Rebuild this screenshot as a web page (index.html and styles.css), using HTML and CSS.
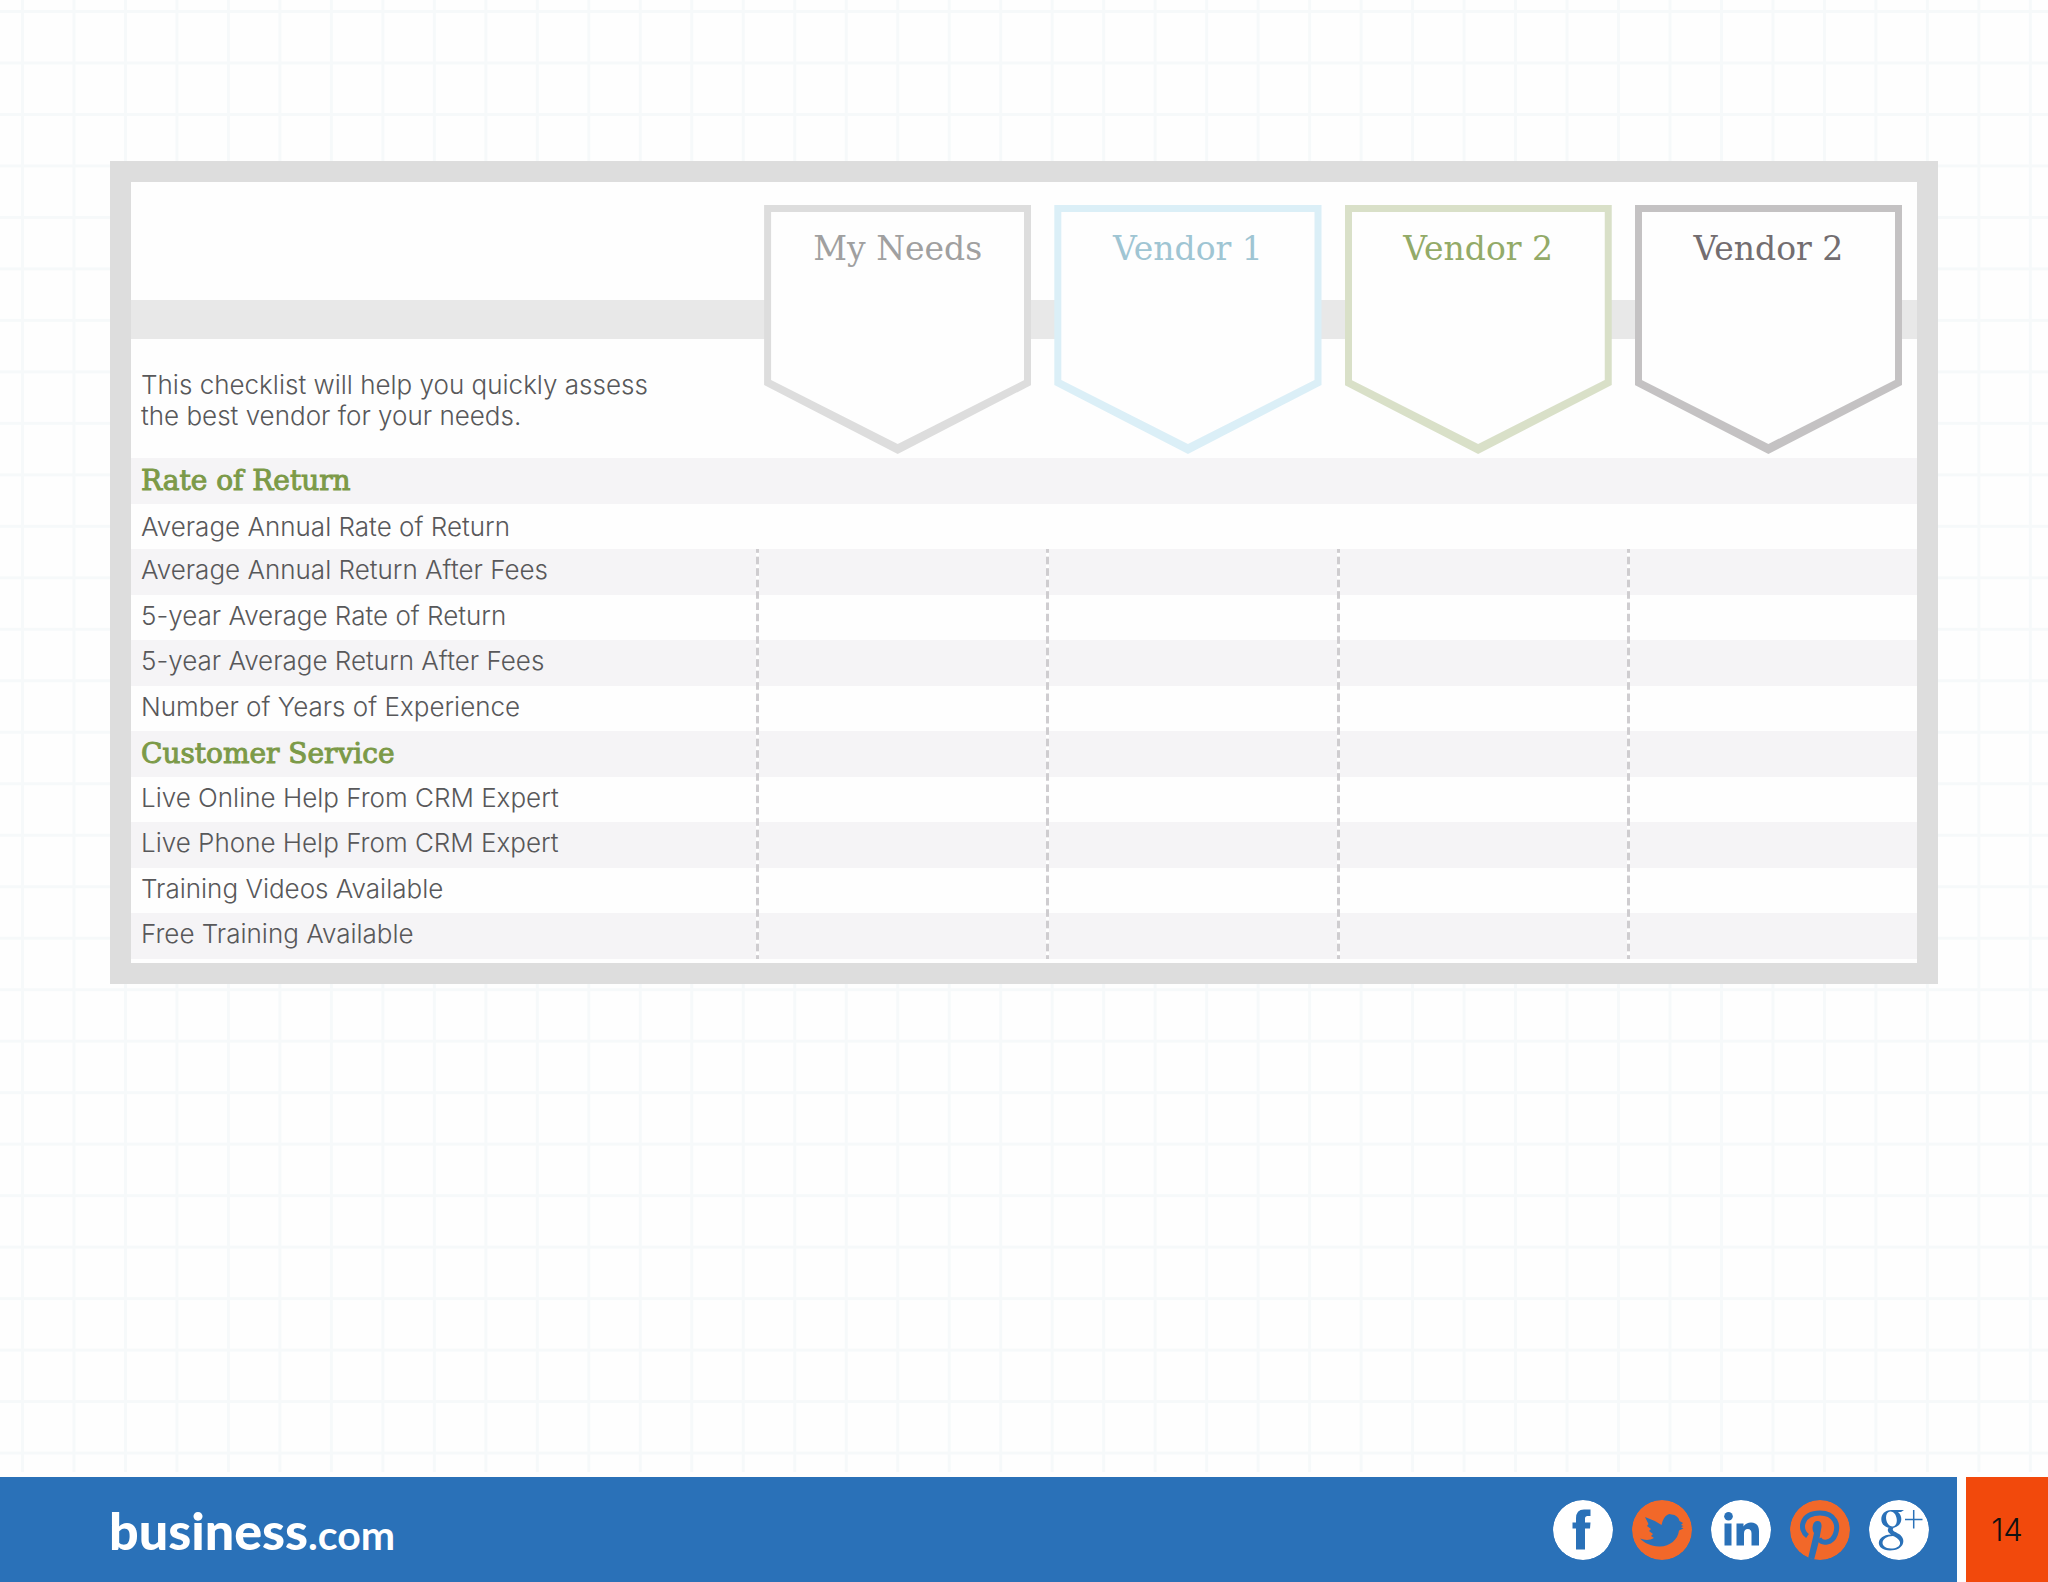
FILE: index.html
```html
<!DOCTYPE html>
<html lang="en">
<head>
    <meta charset="UTF-8">
    <meta name="viewport" content="width=device-width, initial-scale=1.0">
    <title>Vendor Checklist</title>
    <link rel="stylesheet" href="styles.css">
</head>
<body>
    <main class="content">
        <div class="checklist-frame">
            <table class="checklist">
                <thead>
                    <tr>
                        <th class="intro" scope="col">This checklist will help you quickly assess<br>the best vendor for your needs.</th>
                        <th scope="col"><div class="badge needs"><span>My Needs</span></div></th>
                        <th scope="col"><div class="badge vendor-blue"><span>Vendor 1</span></div></th>
                        <th scope="col"><div class="badge vendor-green"><span>Vendor 2</span></div></th>
                        <th scope="col"><div class="badge vendor-gray"><span>Vendor 2</span></div></th>
                    </tr>
                </thead>
                <tbody class="plain">
                    <tr class="section"><th scope="row">Rate of Return</th><td></td><td></td><td></td><td></td></tr>
                    <tr><th scope="row">Average Annual Rate of Return</th><td></td><td></td><td></td><td></td></tr>
                </tbody>
                <tbody class="ruled">
                    <tr><th scope="row">Average Annual Return After Fees</th><td></td><td></td><td></td><td></td></tr>
                    <tr><th scope="row">5-year Average Rate of Return</th><td></td><td></td><td></td><td></td></tr>
                    <tr><th scope="row">5-year Average Return After Fees</th><td></td><td></td><td></td><td></td></tr>
                    <tr><th scope="row">Number of Years of Experience</th><td></td><td></td><td></td><td></td></tr>
                    <tr class="section"><th scope="row">Customer Service</th><td></td><td></td><td></td><td></td></tr>
                    <tr><th scope="row">Live Online Help From CRM Expert</th><td></td><td></td><td></td><td></td></tr>
                    <tr><th scope="row">Live Phone Help From CRM Expert</th><td></td><td></td><td></td><td></td></tr>
                    <tr><th scope="row">Training Videos Available</th><td></td><td></td><td></td><td></td></tr>
                    <tr><th scope="row">Free Training Available</th><td></td><td></td><td></td><td></td></tr>
                </tbody>
            </table>
        </div>
    </main>

    <footer class="footer">
        <div class="footer-bar">
            <a class="logo" href="#">business<small>.com</small></a>
            <nav class="social">
                <a href="#" aria-label="Facebook">
                    <svg viewBox="0 0 60 60">
                        <circle class="disc" cx="30" cy="30" r="30"/>
                        <path class="mark" d="M23 49.5V28.5H19.5V22.5H23V18.5Q23 9.5 31 9.5H37.5V16H34.5Q32 16 32 18.5V22.5H37.5L37 28.5H32V49.5Z"/>
                    </svg>
                </a>
                <a href="#" aria-label="Twitter">
                    <svg viewBox="0 0 60 60">
                        <circle class="disc orange" cx="30" cy="30" r="30"/>
                        <path class="mark" d="M13 17Q22 20 29.5 25Q31 17 36 14.5L37.5 14L39.5 14.5Q46 15 47.5 21L51 23L49 25L51.5 26L49 27.2L51.5 28.5L47 30.5C46 40 37 47 27 46.5C19 46 12 43 8 38.5C13 40.5 18 40.5 22 38L19 36L21 34L17 31L19 29L15 26L16.5 24Z"/>
                    </svg>
                </a>
                <a href="#" aria-label="LinkedIn">
                    <svg viewBox="0 0 60 60">
                        <circle class="disc" cx="30" cy="30" r="30"/>
                        <circle class="mark" cx="17.5" cy="16.3" r="4.3"/>
                        <path class="mark" d="M13.5 23.5H20.5V45.5H13.5ZM25.5 23.5H32.5V26.5Q35 22.5 40 22.5Q48 22.5 48 31.5V45.5H40.5V33.5Q40.5 29 36.8 29Q33 29 33 33.5V45.5H25.5Z"/>
                    </svg>
                </a>
                <a href="#" aria-label="Pinterest">
                    <svg viewBox="0 0 60 60">
                        <circle class="disc orange" cx="30" cy="30" r="30"/>
                        <path class="line" stroke-width="5" d="M17.5 36C8.500 30 11 13 30 13C46 13 48.500 26 45.500 34C42 43.500 32 44.500 29 38.500"/>
                        <path class="mark" d="M22.500 28Q23 21 27.500 21Q32 21 31.500 27L29 41L24 60L18 58.500L24 33Q22.500 31 22.500 28Z"/>
                    </svg>
                </a>
                <a href="#" aria-label="Google Plus">
                    <svg viewBox="0 0 60 60">
                        <circle class="disc" cx="30" cy="30" r="30"/>
                        <path class="mark" fill-rule="evenodd" d="M22.500 10H35L32 12H29C35 17 33 28 22 28C9 28 9 10 22.500 10ZM21 11.500C14.500 12.500 16.500 26.500 23.500 26.500C30.500 26 28.500 11 21 11.500Z"/>
                        <path class="mark" fill-rule="evenodd" d="M20 27.500H25C21.500 30.500 26 31.500 30 34C38 39 35 50.500 21 50.500C6 50.500 6 35 22 34.500C18.500 32 18 29.500 20 27.500ZM24 36C11 36 10 48.500 22 48.500C33 48.500 34.500 40 24 36Z"/>
                        <path class="line" stroke-width="1.5" d="M36 19.500H53.500M44.700 10V28.500"/>
                    </svg>
                </a>
            </nav>
        </div>
        <div class="page-number">14</div>
    </footer>
</body>
</html>
```

FILE: styles.css
```css
* {
    box-sizing: border-box;
}
body {
    margin: 0;
    min-height: 100vh;
    display: flex;
    flex-direction: column;
    font-family: Inter, "Liberation Sans", sans-serif;
    font-weight: 300;
    color: #58585a;
    background-color: #fefefe;
    /* faint graph paper */
    background-image:
        linear-gradient(to right, #f6f9fa 3px, transparent 3px),
        linear-gradient(to bottom, #f6f9fa 3px, transparent 3px);
    background-size: 2.514vw 2.514vw;
    background-position: 21px 10px;
}
.content {
    flex: 1;
    padding: 161px 110px;
}
.checklist-frame {
    border: 21px solid #dddddd;
    background-color: #fefefe;
    padding-bottom: 4px;
}
.checklist {
    width: 100%;
    table-layout: fixed;
    border-collapse: collapse;
}
.checklist th, .checklist td {
    padding: 0;
    font-weight: 300;
    text-align: left;
}

/* header row, with the gray band behind the badges */
.checklist thead tr {
    height: 276px;
    background: linear-gradient(#e8e8e8, #e8e8e8) 0 118px / 100% 39px no-repeat;
}
.checklist thead th {
    vertical-align: top;
    padding: 23px 15px 0 8px;
}
.checklist thead .intro {
    width: 35%;
    padding: 187px 0 0 10px;
    font-size: 26px;
    line-height: 31px;
}
.badge {
    height: 249px;
    padding: 7px 7px 10px;
    clip-path: polygon(0 0, 100% 0, 100% 180px, 50% 100%, 0 180px);
}
.badge span {
    display: block;
    height: 100%;
    padding-top: 17px;
    background-color: #fefefe;
    clip-path: polygon(0 0, 100% 0, 100% 168px, 50% 100%, 0 168px);
    font-family: "DejaVu Serif", serif;
    font-size: 33px;
    line-height: 40px;
    font-weight: 400;
    text-align: center;
}
.needs {
    background-color: #dddddd;
    color: #a0a0a0;
}
.vendor-blue {
    background-color: #dbeff7;
    color: #9fc5d3;
}
.vendor-green {
    background-color: #d9e0c8;
    color: #93aa68;
}
.vendor-gray {
    background-color: #c4c2c3;
    color: #736d70;
}

/* rows */
.checklist tbody tr {
    height: 45px;
}
.checklist tbody tr:nth-child(odd) {
    height: 46px;
    background-color: #f5f4f6;
}
.checklist tbody th {
    padding: 0 0 4px 10px;
    font-size: 26px;
    line-height: 30px;
}
.checklist .plain th {
    padding-bottom: 0;
}
.checklist .section th {
    padding-bottom: 0;
    font-family: "DejaVu Serif", serif;
    font-size: 28px;
    font-weight: 400;
    color: #7c9a48;
    -webkit-text-stroke: 1px #7c9a48;
}
.ruled td {
    background: linear-gradient(#cfcdd0 30%, #fefefe 30%, #fefefe 68%, #cfcdd0 68%) 0 0 / 3px 25% repeat-y;
}

/* footer */
.footer {
    display: flex;
    gap: 9px;
    height: 110px;
    border-top: 5px solid #fefefe;
    background-color: #fefefe;
}
.footer-bar {
    flex: 1;
    display: flex;
    justify-content: space-between;
    align-items: center;
    padding: 0 28px 0 109px;
    background-color: #2a71b8;
}
.logo {
    color: #ffffff;
    font-family: Lato, sans-serif;
    font-size: 52px;
    font-weight: 900;
    text-decoration: none;
}
.logo small {
    font-size: 41px;
    font-weight: 700;
}
.social {
    display: flex;
    gap: 19px;
}
.social svg {
    display: block;
    width: 60px;
    height: 60px;
    border-radius: 50%;
}
.disc {
    fill: #ffffff;
}
.disc.orange {
    fill: #f26829;
}
.mark {
    fill: #2a71b8;
}
.line {
    fill: none;
    stroke: #2a71b8;
}
.page-number {
    width: 82px;
    display: flex;
    justify-content: center;
    align-items: center;
    background-color: #f2490c;
    color: #111111;
    font-size: 31px;
}
```
